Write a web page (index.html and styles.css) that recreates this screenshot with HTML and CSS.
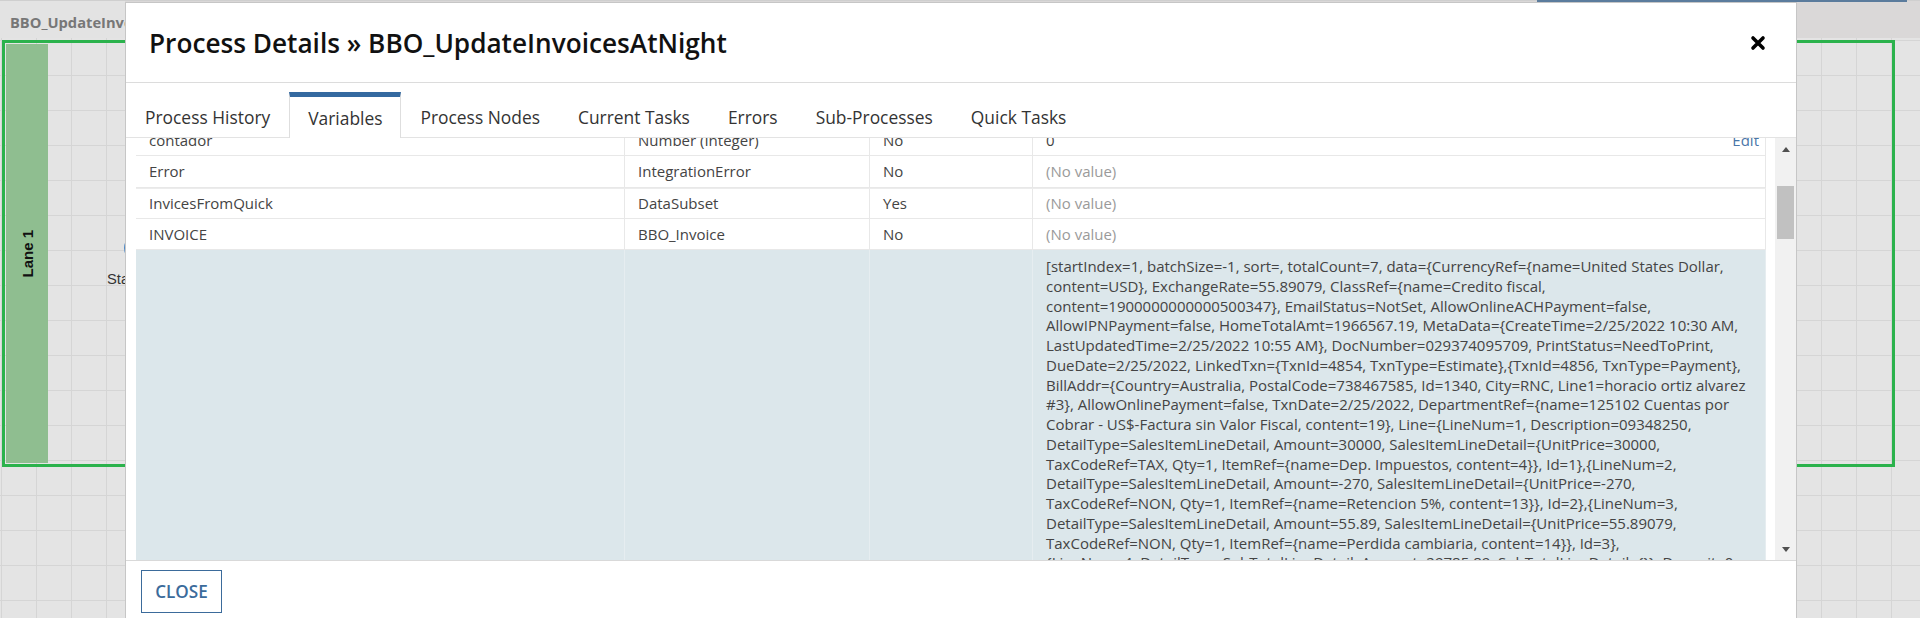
FILE: index.html
```html
<!DOCTYPE html>
<html>
<head>
<meta charset="utf-8">
<title>Process Details</title>
<link rel="stylesheet" href="styles.css">
</head>
<body>
<div class="app">
  <div class="topbar"><div class="doc-tab">BBO_UpdateInvoicesAtNight</div></div>
  <div class="canvas">
    <div class="pool">
      <div class="lane-head"><span>Lane 1</span></div>
    </div>
    <div class="start-event"></div>
    <div class="start-label">Start</div>
  </div>
</div>
<div class="topline"></div>

<div class="modal">
  <div class="modal-header">
    <h1 class="modal-title">Process Details » BBO_UpdateInvoicesAtNight</h1>
    <svg class="close-x" width="16" height="16" viewBox="0 0 16 16"><path d="M3 3 L13 13 M13 3 L3 13" stroke="#000" stroke-width="3.6" stroke-linecap="round" fill="none"/></svg>
  </div>
  <div class="tabs">
    <div class="tab">Process History</div>
    <div class="tab active">Variables</div>
    <div class="tab">Process Nodes</div>
    <div class="tab">Current Tasks</div>
    <div class="tab">Errors</div>
    <div class="tab">Sub-Processes</div>
    <div class="tab">Quick Tasks</div>
  </div>
  <div class="modal-body">
    <div class="table-wrap">
      <div class="vars">
        <div class="row">
          <div class="cell">contador</div>
          <div class="cell">Number (Integer)</div>
          <div class="cell">No</div>
          <div class="cell last split"><span>0</span><a class="edit">Edit</a></div>
        </div>
        <div class="row">
          <div class="cell">Error</div>
          <div class="cell">IntegrationError</div>
          <div class="cell">No</div>
          <div class="cell last muted">(No value)</div>
        </div>
        <div class="row thick">
          <div class="cell">InvicesFromQuick</div>
          <div class="cell">DataSubset</div>
          <div class="cell">Yes</div>
          <div class="cell last muted">(No value)</div>
        </div>
        <div class="row">
          <div class="cell">INVOICE</div>
          <div class="cell">BBO_Invoice</div>
          <div class="cell">No</div>
          <div class="cell last muted">(No value)</div>
        </div>
        <div class="row big">
          <div class="cell"></div>
          <div class="cell"></div>
          <div class="cell"></div>
          <div class="cell last value">
            <div>[startIndex=1, batchSize=-1, sort=, totalCount=7, data={CurrencyRef={name=United States Dollar,</div>
            <div>content=USD}, ExchangeRate=55.89079, ClassRef={name=Credito fiscal,</div>
            <div>content=1900000000000500347}, EmailStatus=NotSet, AllowOnlineACHPayment=false,</div>
            <div>AllowIPNPayment=false, HomeTotalAmt=1966567.19, MetaData={CreateTime=2/25/2022 10:30 AM,</div>
            <div>LastUpdatedTime=2/25/2022 10:55 AM}, DocNumber=029374095709, PrintStatus=NeedToPrint,</div>
            <div>DueDate=2/25/2022, LinkedTxn={TxnId=4854, TxnType=Estimate},{TxnId=4856, TxnType=Payment},</div>
            <div>BillAddr={Country=Australia, PostalCode=738467585, Id=1340, City=RNC, Line1=horacio ortiz alvarez</div>
            <div>#3}, AllowOnlinePayment=false, TxnDate=2/25/2022, DepartmentRef={name=125102 Cuentas por</div>
            <div>Cobrar - US$-Factura sin Valor Fiscal, content=19}, Line={LineNum=1, Description=09348250,</div>
            <div>DetailType=SalesItemLineDetail, Amount=30000, SalesItemLineDetail={UnitPrice=30000,</div>
            <div>TaxCodeRef=TAX, Qty=1, ItemRef={name=Dep. Impuestos, content=4}}, Id=1},{LineNum=2,</div>
            <div>DetailType=SalesItemLineDetail, Amount=-270, SalesItemLineDetail={UnitPrice=-270,</div>
            <div>TaxCodeRef=NON, Qty=1, ItemRef={name=Retencion 5%, content=13}}, Id=2},{LineNum=3,</div>
            <div>DetailType=SalesItemLineDetail, Amount=55.89, SalesItemLineDetail={UnitPrice=55.89079,</div>
            <div>TaxCodeRef=NON, Qty=1, ItemRef={name=Perdida cambiaria, content=14}}, Id=3},</div>
            <div>{LineNum=4, DetailType=SubTotalLineDetail, Amount=29785.89, SubTotalLineDetail={}}, Deposit=0,</div>
            <div>Balance=1966567.19, TotalAmt=29785.89, CustomerRef={name=Cliente Demo, content=58}}]</div>
          </div>
        </div>
      </div>
    </div>
    <div class="scrollbar">
      <div class="sb-btn"><span class="tri-up"></span></div>
      <div class="sb-thumb"></div>
      <div class="sb-space"></div>
      <div class="sb-btn"><span class="tri-down"></span></div>
    </div>
  </div>
  <div class="modal-footer">
    <button class="btn-close">CLOSE</button>
  </div>
</div>
</body>
</html>
```

FILE: styles.css
```css
html, body {
  margin: 0;
  padding: 0;
}
body {
  width: 1920px;
  height: 618px;
  overflow: hidden;
  position: relative;
  font-family: "Open Sans", "Liberation Sans", sans-serif;
  background: #e4e4e4;
}

/* ---------- background app ---------- */
.app {
  display: flex;
  flex-direction: column;
  height: 618px;
}
.topbar {
  height: 38px;
  flex: none;
  background: #dad8d8;
  border-top: 1px solid #cfcfcf;
  box-sizing: border-box;
  display: flex;
}
.doc-tab {
  width: 125px;
  background: #e3e3e3;
  box-sizing: border-box;
  padding: 4px 0 0 10px;
  display: flex;
  align-items: center;
  font-size: 14.7px;
  font-weight: 700;
  color: #777;
  white-space: nowrap;
  overflow: hidden;
}
.canvas {
  flex: 1;
  position: relative;
  background-color: #e4e4e4;
  background-image:
    linear-gradient(to right, #d5d5d5 1px, transparent 1px),
    linear-gradient(to bottom, #d5d5d5 1px, transparent 1px);
  background-size: 35px 35px;
  background-position: 1px 2px;
}
.pool {
  position: absolute;
  left: 2px;
  top: 2px;
  width: 1893px;
  height: 427px;
  border: 3px solid #2bb24c;
  box-sizing: border-box;
  padding: 1px;
  display: flex;
}
.lane-head {
  width: 42px;
  background: #8fbe90;
  display: flex;
  align-items: center;
  justify-content: center;
}
.lane-head span {
  writing-mode: vertical-rl;
  transform: rotate(180deg);
  font-family: "Liberation Sans", Arial, sans-serif;
  font-weight: 700;
  font-size: 15px;
  color: #111;
}
.start-event {
  position: absolute;
  left: 124px;
  top: 195px;
  width: 30px;
  height: 30px;
  border: 2px solid #4a86c5;
  border-radius: 50%;
  box-sizing: border-box;
}
.start-label {
  position: absolute;
  left: 107px;
  top: 233px;
  width: 18px;
  overflow: hidden;
  white-space: nowrap;
  font-family: "Liberation Sans", Arial, sans-serif;
  font-size: 14.7px;
  color: #333;
}
.topline {
  position: absolute;
  left: 1537px;
  top: 0;
  width: 370px;
  height: 2px;
  background: #5b7c9d;
}

/* ---------- modal ---------- */
.modal {
  position: absolute;
  left: 125px;
  top: 2px;
  width: 1672px;
  height: 640px;
  background: #fff;
  border: 1px solid #c6c6c6;
  box-sizing: border-box;
  display: flex;
  flex-direction: column;
}
.modal-header {
  height: 80px;
  flex: none;
  box-sizing: border-box;
  border-bottom: 1px solid #dcdcdc;
  display: flex;
  align-items: center;
  justify-content: space-between;
  padding: 0 30px 0 23px;
}
.modal-title {
  margin: 0;
  font-size: 26.2px;
  font-weight: 600;
  color: #111;
  letter-spacing: 0;
}
.close-x {
  display: block;
}

.tabs {
  height: 55px;
  flex: none;
  box-sizing: border-box;
  border-bottom: 1px solid #e3e3e3;
  display: flex;
  align-items: flex-end;
}
.tab {
  height: 45px;
  box-sizing: border-box;
  padding: 0 18px;
  border-top: 5px solid transparent;
  border-left: 1px solid transparent;
  border-right: 1px solid transparent;
  display: flex;
  align-items: center;
  font-size: 17.4px;
  color: #333;
  white-space: nowrap;
}
.tab.active {
  height: 46px;
  margin-bottom: -1px;
  border-top-color: #3469a0;
  border-left-color: #dedede;
  border-right-color: #dedede;
  background: #fff;
}

.modal-body {
  height: 422px;
  flex: none;
  display: flex;
  padding-left: 10px;
  gap: 9px;
}
.table-wrap {
  width: 1630px;
  overflow: hidden;
}
.vars {
  margin-top: -13px;
  font-size: 15px;
  color: #444;
}
.row {
  display: grid;
  grid-template-columns: 488px 245px 163px 734px;
  height: 31.3px;
  box-sizing: border-box;
  border-bottom: 1px solid #e8e8e8;
}
.row.thick {
  border-top: 1px solid #ececec;
}
.cell {
  padding-left: 13px;
  display: flex;
  align-items: center;
  white-space: nowrap;
  overflow: hidden;
}
.cell + .cell {
  border-left: 1px solid #e8e8e8;
}
.cell.last {
  border-right: 1px solid #e8e8e8;
}
.cell.split {
  justify-content: space-between;
  padding-right: 6px;
}
.edit {
  color: #4a76a8;
}
.muted {
  color: #9a9a9a;
}
.row.big {
  height: 700px;
  background: #dce7eb;
  border-bottom: none;
}
.row.big .cell {
  border-color: #e6edf0;
}
.cell.value {
  display: block;
  padding-top: 7px;
  line-height: 19.75px;
  color: #444;
}

.scrollbar {
  width: 21px;
  background: #f1f1f1;
  display: flex;
  flex-direction: column;
  align-items: center;
}
.sb-btn {
  height: 22px;
  width: 21px;
  display: flex;
  align-items: center;
  justify-content: center;
}
.tri-up {
  width: 0;
  height: 0;
  border-left: 4px solid transparent;
  border-right: 4px solid transparent;
  border-bottom: 5px solid #505050;
}
.tri-down {
  width: 0;
  height: 0;
  border-left: 4px solid transparent;
  border-right: 4px solid transparent;
  border-top: 5px solid #505050;
}
.sb-thumb {
  margin-top: 26px;
  width: 17px;
  height: 53px;
  background: #c1c1c1;
}
.sb-space {
  flex: 1;
}

.modal-footer {
  flex: 1;
  border-top: 1px solid #d9d9d9;
  padding: 9px 0 0 15px;
}
.btn-close {
  width: 81px;
  height: 43px;
  background: #fff;
  border: 1px solid #3b6b9b;
  font-family: "Open Sans", sans-serif;
  font-size: 17.1px;
  font-weight: 600;
  color: #3b6b9b;
  padding: 0;
}
```
